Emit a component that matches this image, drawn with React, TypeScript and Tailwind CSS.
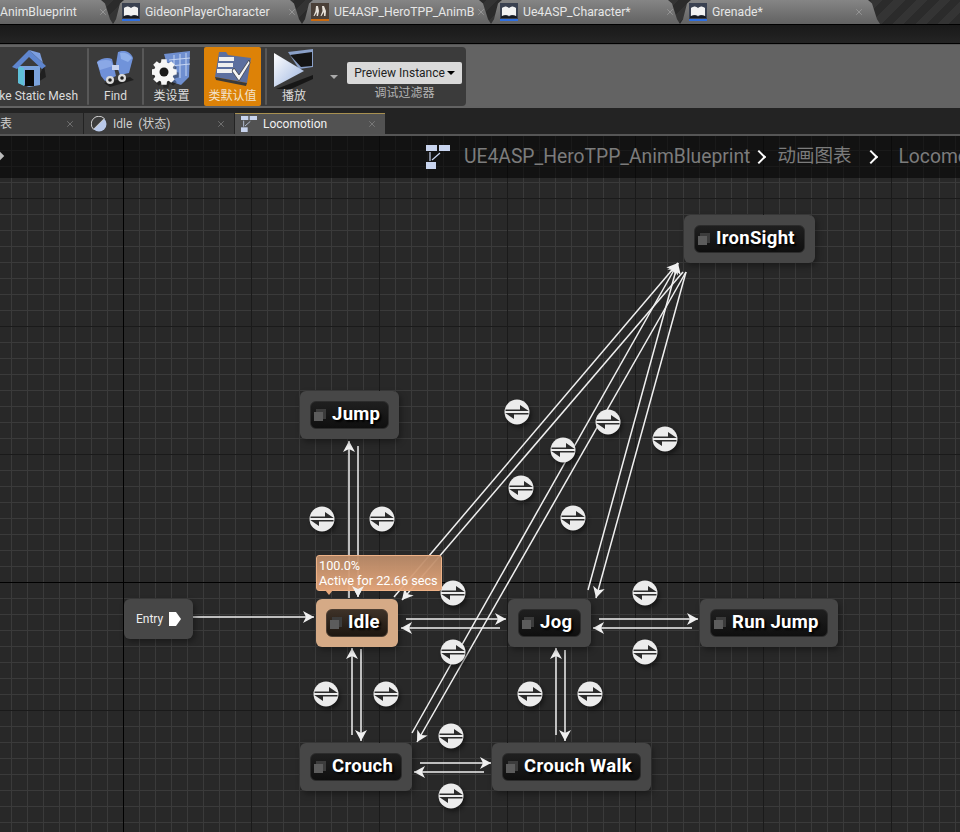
import React from 'react';
import { X } from 'lucide-react';

type Pt = [number, number];

const wires: [Pt, Pt][] = [
  [[193, 617], [314, 617]],
  [[349, 598], [349, 441]],
  [[358, 446], [358, 597]],
  [[352, 735], [352, 648]],
  [[361, 649], [361, 741]],
  [[556, 735], [556, 648]],
  [[565, 650], [565, 741]],
  [[406, 619], [506, 619]],
  [[500, 628], [401, 628]],
  [[599, 619], [698, 619]],
  [[692, 628], [593, 628]],
  [[420, 763], [491, 763]],
  [[484, 772], [414, 772]],
  [[394, 597], [678, 263]],
  [[683, 272], [402, 600]],
  [[412, 733], [678, 263]],
  [[686, 272], [417, 742]],
  [[588, 590], [678, 263]],
  [[686, 272], [596, 598]],
];

const transitions: Pt[] = [
  [517, 412], [608, 422], [665, 439], [563, 450], [521, 488], [573, 518],
  [322, 519], [382, 519], [453, 593], [645, 593], [453, 652], [645, 652],
  [326, 694], [386, 694], [530, 694], [590, 694], [451, 736], [451, 796],
];

const nodes = [
  { name: 'IronSight', pos: 'left-[684px] top-[79px] w-[131px]' },
  { name: 'Jump', pos: 'left-[300px] top-[255px] w-[99px]' },
  { name: 'Idle', pos: 'left-[316px] top-[463px] w-[82px]', active: true },
  { name: 'Jog', pos: 'left-[508px] top-[463px] w-[83px]' },
  { name: 'Run Jump', pos: 'left-[700px] top-[463px] w-[138px]' },
  { name: 'Crouch', pos: 'left-[300px] top-[607px] w-[112px]' },
  { name: 'Crouch Walk', pos: 'left-[492px] top-[607px] w-[159px]' },
];

function headPoints(from: Pt, to: Pt) {
  const dx = to[0] - from[0];
  const dy = to[1] - from[1];
  const len = Math.hypot(dx, dy);
  const ux = dx / len;
  const uy = dy / len;
  const p = (back: number, side: number) =>
    `${to[0] - ux * back - uy * side},${to[1] - uy * back + ux * side}`;
  return [p(0, 0), p(11, 6), p(8, 0), p(11, -6)].join(' ');
}

function gearPath(cx: number, cy: number, outer: number, inner: number) {
  const pts: string[] = [];
  for (let i = 0; i < 8; i++) {
    const a = (i * Math.PI) / 4;
    [[-0.3, inner], [-0.2, outer], [0.2, outer], [0.3, inner]].forEach(([off, r]) => {
      pts.push(`${(cx + Math.cos(a + off) * r).toFixed(1)} ${(cy + Math.sin(a + off) * r).toFixed(1)}`);
    });
  }
  return `M${pts.join('L')}Z`;
}

function Transition({ at }: { at: Pt }) {
  return (
    <g transform={`translate(${at[0]} ${at[1]})`}>
      <circle cx="2" cy="3" r="12.5" fill="#000" opacity="0.45" filter="url(#soft)" />
      <circle r="12.5" fill="#ececec" />
      <path d="M-11.5 -2.6H3V-7L11.8 -1H-11.5Z" fill="#2c2c2c" />
      <path d="M11.5 2.6H-3V7L-11.8 1H11.5Z" fill="#2c2c2c" />
    </g>
  );
}

function GraphDrawing() {
  return (
    <svg className="absolute inset-0" width="960" height="696" viewBox="0 136 960 696">
      <defs>
        <filter id="soft" x="-50%" y="-50%" width="200%" height="200%">
          <feGaussianBlur stdDeviation="2" />
        </filter>
        <pattern id="minor" x="123" y="582" width="16" height="16" patternUnits="userSpaceOnUse">
          <path d="M0 0H16V1H1V16H0Z" fill="#3a3a3a" />
        </pattern>
        <pattern id="major" x="123" y="582" width="128" height="128" patternUnits="userSpaceOnUse">
          <path d="M0 0H128V1H1V128H0Z" fill="#1a1a1a" />
        </pattern>
      </defs>
      <rect x="0" y="136" width="960" height="696" fill="#282828" />
      <rect x="0" y="136" width="960" height="696" fill="url(#minor)" />
      <rect x="0" y="136" width="960" height="696" fill="url(#major)" />
      <rect x="123" y="136" width="1" height="696" fill="#000" />
      <rect x="0" y="582" width="960" height="1" fill="#000" />
      {wires.map(([from, to], i) => (
        <g key={i}>
          <line x1={from[0]} y1={from[1]} x2={to[0]} y2={to[1]} stroke="#f0f0f0" strokeWidth="1.5" />
          <polygon points={headPoints(from, to)} fill="#f0f0f0" />
        </g>
      ))}
      {transitions.map((at, i) => (
        <Transition key={i} at={at} />
      ))}
    </svg>
  );
}

function StateIcon() {
  return (
    <svg width="14" height="14" viewBox="0 0 14 14" className="shrink-0">
      <rect x="3" y="1" width="10" height="10" fill="#3c3c3c" />
      <rect x="1" y="4" width="9" height="9" fill="#5c5c5c" />
    </svg>
  );
}

function StateNode({ name, pos, active }: { name: string; pos: string; active?: boolean }) {
  return (
    <div
      className={`absolute ${pos} h-[48px] rounded-[6px] p-[10px] shadow-[2px_3px_6px_rgba(0,0,0,0.35)] ${
        active ? 'bg-[#d5aa86]' : 'bg-[#474747]'
      }`}
    >
      <div
        className={`flex h-full items-center gap-[5px] rounded-[6px] border pl-[2px] ${
          active
            ? 'border-[#4a3d32] bg-gradient-to-b from-[#3e3228] to-[#1d1610]'
            : 'border-[#2c2c2c] bg-gradient-to-b from-[#1f1f1f] to-[#0f0f0f]'
        }`}
      >
        <StateIcon />
        <span className="whitespace-nowrap pb-[2px] text-[18.5px] font-bold leading-none tracking-[0.3px] text-white [text-shadow:2px_2px_2px_#000]">
          {name}
        </span>
      </div>
    </div>
  );
}

function BookIcon({ line = '#2f6fe0' }: { line?: string }) {
  return (
    <svg width="18" height="18" viewBox="0 0 18 18" className="shrink-0">
      <rect width="18" height="18" fill="#3a4150" />
      <path d="M2 5C5 3 7 3 9 5C11 3 13 3 16 5V13C13 11.5 11 11.5 9 13C7 11.5 5 11.5 2 13Z" fill="#f2f2f2" />
      <path d="M1 13.5C5 12 7 12.5 9 14C11 12.5 13 12 17 13.5V15H1Z" fill="#15181e" />
      <rect y="16" width="18" height="2" fill={line} />
    </svg>
  );
}

function AnimIcon() {
  return (
    <svg width="18" height="18" viewBox="0 0 18 18" className="shrink-0">
      <rect width="18" height="18" fill="#4a4038" />
      <path d="M5 3H7L8 8L7 13H5.5L6 9L3.5 13H2.5L4.5 8Z" fill="#e6e0d8" />
      <path d="M11 3H13L15 8L14.5 13H13L13 9L10.5 13H9.5L11.5 8Z" fill="#e6e0d8" />
      <rect y="16" width="18" height="2" fill="#c96a10" />
    </svg>
  );
}

function TopTab({ label, icon, width, first, last }: { label: string; icon?: React.ReactNode; width: string; first?: boolean; last?: boolean }) {
  return (
    <div
      className={`flex h-[24px] shrink-0 items-center ${width} ${
        first
          ? 'pr-[5px] [clip-path:polygon(0_0,calc(100%-12px)_0,calc(100%-8px)_15%,calc(100%-3px)_80%,100%_100%,0_100%)]'
          : `pl-[9px] [clip-path:polygon(0_100%,3px_80%,7px_15%,11px_0,calc(100%-12px)_0,calc(100%-8px)_15%,calc(100%-3px)_80%,100%_100%)] ${last ? 'pr-[16px]' : 'pr-[5px]'}`
      } bg-gradient-to-b from-[#858585] to-[#626262]`}
    >
      {icon}
      <span className={`whitespace-nowrap text-[12.2px] leading-none text-[#e6e6e6] ${icon ? 'ml-[5px]' : ''}`}>{label}</span>
      <X size={10} strokeWidth={1.5} className="ml-auto shrink-0 text-[#a8a8a8]" />
    </div>
  );
}

function HouseIcon() {
  return (
    <svg width="38" height="40" viewBox="0 0 38 40">
      <path d="M20 38L36 28L34 16L26 34Z" fill="#000" opacity="0.45" />
      <path d="M8 17H30V36L19 38L8 34Z" fill="#7ba3dc" />
      <path d="M8 17L14 19V37L8 34Z" fill="#5fc0d8" />
      <path d="M15 21H24V37H15Z" fill="#0a0a0a" />
      <path d="M19 1L2 18L7 20L19 8L32 20L36 17Z" fill="#5f86cf" />
      <path d="M19 1L33 14L30 4Z" fill="#7d9fe0" />
    </svg>
  );
}

function BinocularsIcon() {
  return (
    <svg width="40" height="38" viewBox="0 0 40 38">
      <path d="M8 33L34 27L38 30L14 37Z" fill="#000" opacity="0.45" />
      <path d="M1 12C5 8 12 7 16 9L20 26L9 31L5 26Z" fill="#6f90d8" />
      <path d="M1 12C5 10 11 9 15 11L17 16L4 20Z" fill="#8aa8e6" />
      <path d="M22 2C26 0 34 0 37 8L33 23L24 25L20 14Z" fill="#7093da" />
      <path d="M24 3C28 2 33 3 36 8L32 12L25 9Z" fill="#8fb0ea" />
      <rect x="16" y="15" width="7" height="5" fill="#c8d4ef" />
      <circle cx="14" cy="30" r="4" fill="#dcdcdc" />
      <circle cx="14" cy="30" r="1.8" fill="#222" />
      <circle cx="26" cy="28" r="4" fill="#dcdcdc" />
      <circle cx="26" cy="28" r="1.8" fill="#222" />
    </svg>
  );
}

function ClassSettingsIcon() {
  return (
    <svg width="40" height="38" viewBox="0 0 40 38">
      <path d="M12 4L38 1L37 27L29 35L20 32Z" fill="#6f8fd0" />
      <path d="M22 5V26M28 4V28M34 3V26M17 10L38 8M18 16L38 14" stroke="#c6d5f2" strokeWidth="1" fill="none" />
      <path d={gearPath(12, 23, 13, 10)} fill="#000" opacity="0.35" transform="translate(2 2)" />
      <path d={gearPath(12, 22, 13, 10)} fill="#f6f6f6" />
      <circle cx="12" cy="22" r="4.5" fill="#1a1a1a" />
    </svg>
  );
}

function DefaultsIcon() {
  return (
    <svg width="40" height="38" viewBox="0 0 40 38">
      <path d="M6 2L13 2L15 5L38 8L34 33L2 27Z" fill="#5c6f9f" />
      <path d="M2 27L34 33L33 36L3 30Z" fill="#3a3a3a" />
      <rect x="6" y="7" width="15" height="4" fill="#efefef" />
      <rect x="5" y="13" width="15" height="4" fill="#efefef" />
      <rect x="4" y="19" width="15" height="4" fill="#efefef" />
      <path d="M21 18L26 25L36 10L37 13L26 31L19 21Z" fill="#f4f4f4" stroke="#222" strokeWidth="0.6" />
    </svg>
  );
}

function PlayIcon() {
  return (
    <svg width="42" height="42" viewBox="0 0 42 42">
      <defs>
        <linearGradient id="playFill" x1="0" y1="0" x2="1" y2="1">
          <stop offset="0" stopColor="#ffffff" />
          <stop offset="1" stopColor="#9db5e0" />
        </linearGradient>
      </defs>
      <path d="M15 4L40 1V19L26 21Z" fill="#8aa0c8" />
      <path d="M17 7L39 4V18L28 19Z" fill="#141414" />
      <path d="M3 41L40 27L40 31L18 41Z" fill="#000" opacity="0.6" />
      <path d="M1 5L31 23L1 39Z" fill="url(#playFill)" />
    </svg>
  );
}

function ToolButton({ label, icon, width, clipped }: { label: string; icon: React.ReactNode; width: string; clipped?: boolean }) {
  return (
    <div className={`flex h-full shrink-0 flex-col overflow-hidden ${width} ${clipped ? 'items-end pr-[9px]' : 'items-center'}`}>
      <div className={`flex h-[41px] items-center pt-[2px] ${clipped ? 'mr-[30px]' : ''}`}>{icon}</div>
      <span className="whitespace-nowrap text-[12px] leading-[16px] text-[#dcdcdc]">{label}</span>
    </div>
  );
}

function Separator() {
  return <div className="my-[1px] w-[2px] shrink-0 rounded-[1px] bg-[#585858]" />;
}

function DocTab({ label, icon, width, active, first }: { label: string; icon?: React.ReactNode; width: string; active?: boolean; first?: boolean }) {
  return (
    <div
      className={`flex h-full shrink-0 items-center ${width} ${first ? '' : 'pl-[6px]'} pr-[8px] ${
        active ? 'border-t border-t-[#a89050] bg-[#525252] text-[#f0f0f0]' : 'bg-[#3c3c3c] text-[#cfcfcf]'
      }`}
    >
      {icon}
      <span className={`whitespace-nowrap text-[12px] leading-none ${icon ? 'ml-[6px]' : ''}`}>{label}</span>
      <X size={10} strokeWidth={1.5} className="ml-auto shrink-0 text-[#8f8f8f]" />
    </div>
  );
}

function GraphIcon({ size = 16, cls = 'fill-[#c8d4ee] stroke-[#c8d4ee]' }: { size?: number; cls?: string }) {
  return (
    <svg width={size} height={size} viewBox="0 0 24 24" className={`shrink-0 ${cls}`}>
      <rect x="0" y="0" width="11" height="6" stroke="none" />
      <rect x="13" y="0" width="11" height="6" stroke="none" />
      <rect x="0" y="17" width="10" height="7" stroke="none" />
      <path d="M4 7V16M6 15L14 8" fill="none" strokeWidth="1.2" />
    </svg>
  );
}

export default function App() {
  const chevron = 'h-[10px] w-[10px] shrink-0 rotate-45 border-r-2 border-t-2 border-r-white border-t-white';
  return (
    <div className="flex h-[832px] w-[960px] flex-col overflow-hidden bg-black font-[family-name:Roboto,'Noto_Sans_CJK_SC',sans-serif]">
      <div className="flex h-[24px] shrink-0 bg-[repeating-linear-gradient(135deg,#2b2b2b_0,#2b2b2b_8px,#343434_8px,#343434_16px)]">
        <TopTab first label="AnimBlueprint" width="w-[113px]" />
        <TopTab label="GideonPlayerCharacter" icon={<BookIcon />} width="w-[189px]" />
        <TopTab label="UE4ASP_HeroTPP_AnimB" icon={<AnimIcon />} width="w-[189px]" />
        <TopTab label="Ue4ASP_Character*" icon={<BookIcon />} width="w-[189px]" />
        <TopTab last label="Grenade*" icon={<BookIcon />} width="w-[200px]" />
      </div>
      <div className="mt-[1px] h-[18px] shrink-0 bg-gradient-to-b from-[#191919] to-[#242424]" />
      <div className="mt-[1px] h-[1px] shrink-0 bg-[#555]" />
      <div className="flex h-[63px] shrink-0 items-center bg-[#636363]">
        <div className="flex h-[59px] w-[466px] items-stretch rounded-r-[4px] bg-[#3b3b3b] pr-[4px]">
          <ToolButton clipped label="Make Static Mesh" icon={<HouseIcon />} width="w-[87px]" />
          <Separator />
          <ToolButton label="Find" icon={<BinocularsIcon />} width="w-[53px]" />
          <Separator />
          <ToolButton label="类设置" icon={<ClassSettingsIcon />} width="w-[55px]" />
          <div className="ml-[5px] flex h-full w-[57px] shrink-0 flex-col items-center rounded-[2px] bg-[#dd8207]">
            <div className="flex h-[41px] items-center pt-[2px]"><DefaultsIcon /></div>
            <span className="whitespace-nowrap text-[12px] leading-[16px] text-[#f2e2cc]">类默认值</span>
          </div>
          <div className="ml-[4px] flex"><Separator /></div>
          <ToolButton label="播放" icon={<PlayIcon />} width="w-[54px]" />
          <div className="ml-[6px] flex w-[14px] items-center justify-center">
            <div className="h-0 w-0 border-x-[4px] border-t-[4px] border-x-transparent border-t-[#aaa]" />
          </div>
          <div className="ml-[6px] flex flex-col items-center pt-[15px]">
            <div className="flex h-[22px] w-[115px] items-center justify-center gap-[2px] rounded-[2px] bg-[#d9d9d9] text-[12px] text-[#222]">
              Preview Instance
              <span className="h-0 w-0 border-x-[4px] border-t-[4px] border-x-transparent border-t-black" />
            </div>
            <span className="mt-[1px] text-[12px] leading-[16px] text-[#b4b4b4]">调试过滤器</span>
          </div>
        </div>
      </div>
      <div className="flex h-[26px] shrink-0 items-end gap-[1px] bg-[#232323] pt-[5px]">
        <DocTab first label="表" width="w-[83px]" />
        <DocTab
          label={'Idle\u00a0\u00a0(状态)'}
          width="w-[150px]"
          icon={
            <svg width="16" height="16" viewBox="0 0 16 16" className="ml-[1px] shrink-0">
              <circle cx="8" cy="8" r="7.5" fill="#b9c9ea" />
              <path d="M2.5 13.3L13.3 2.5A7.5 7.5 0 0 0 2.5 13.3Z" fill="#3c3c3c" stroke="#d0d0d0" strokeWidth="1" />
            </svg>
          }
        />
        <DocTab active label="Locomotion" width="w-[150px]" icon={<GraphIcon />} />
      </div>
      <div className="h-[2px] shrink-0 bg-[#565656]" />
      <div className="relative flex-1 overflow-hidden">
        <GraphDrawing />

        <div className="absolute left-0 top-0 flex h-[42px] w-[960px] items-center bg-black/55 pl-[426px] text-[19.3px] text-[#7c7c7c]">
          <GraphIcon size={24} />
          <span className="ml-[14px] whitespace-nowrap">UE4ASP_HeroTPP_AnimBlueprint</span>
          <span className={`ml-[4px] ${chevron}`} />
          <span className="ml-[13px] whitespace-nowrap text-[18.5px]">动画图表</span>
          <span className={`ml-[15px] ${chevron}`} />
          <span className="ml-[22px] whitespace-nowrap">Locomotion</span>
        </div>
        <div className="absolute -left-[3px] top-[17px] h-[6px] w-[6px] rotate-45 bg-[#bbb]" />

        <div className="absolute left-[124px] top-[463px] flex h-[40px] w-[69px] items-center rounded-[6px] bg-[#474747] pl-[12px] shadow-[2px_3px_6px_rgba(0,0,0,0.35)]">
          <span className="text-[12px] leading-none text-[#eee]">Entry</span>
          <svg width="12" height="14" viewBox="0 0 12 14" className="ml-[6px]">
            <path d="M0 0H7L12 7L7 14H0Z" fill="#fff" />
          </svg>
        </div>

        {nodes.map((n) => (
          <StateNode key={n.name} {...n} />
        ))}

        <div className="absolute left-[316px] top-[419px] h-[36px] w-[126px] rounded-[3px] border border-[#eeb287] bg-gradient-to-b from-[#b98a68]/95 to-[#e8a87c]/95 px-[2px] pt-[2px] text-[12.7px] leading-[15px] text-white">
          <div>100.0%</div>
          <div className="whitespace-nowrap">Active for 22.66 secs</div>
          <div className="absolute left-[8px] top-[34px] h-0 w-0 border-x-[4px] border-t-[5px] border-x-transparent border-t-[#e8a87c]" />
        </div>
        {/* the wire's head sits on top of the tooltip */}
        <svg className="absolute left-[352px] top-[450px]" width="12" height="12" viewBox="352 586 12 12">
          <polygon points={headPoints([358, 446], [358, 597])} fill="#f0f0f0" />
        </svg>
      </div>
    </div>
  );
}
